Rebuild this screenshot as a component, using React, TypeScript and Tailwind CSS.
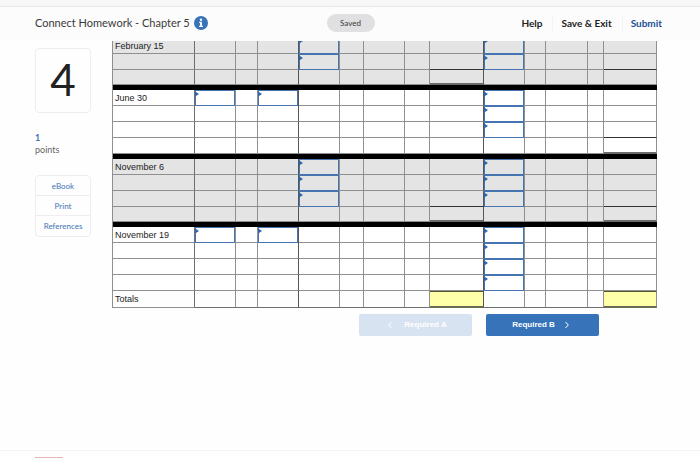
import type { ReactNode } from "react";

type Section = {
  label: string;
  shaded?: boolean;
  rows: string[];
  inputs: number[][];
  subtotals?: { row: number; cols: number[]; doubled: number[] };
};

const columns = [82, 41, 22, 41, 41, 24, 41, 25, 54, 41, 21, 42, 16, 53];

const sections: Section[] = [
  {
    label: "February 15",
    shaded: true,
    rows: ["h-[13px]", "h-4", "h-[15px]"],
    inputs: [[4, 9], [4, 9], []],
    subtotals: { row: 2, cols: [8, 13], doubled: [8] },
  },
  {
    label: "June 30",
    rows: ["h-4", "h-4", "h-4", "h-4"],
    inputs: [[1, 3, 9], [9], [9], []],
    subtotals: { row: 3, cols: [13], doubled: [13] },
  },
  {
    label: "November 6",
    shaded: true,
    rows: ["h-4", "h-4", "h-4", "h-[15px]"],
    inputs: [[4, 9], [4, 9], [4, 9], []],
    subtotals: { row: 3, cols: [8, 13], doubled: [8, 13] },
  },
  {
    label: "November 19",
    rows: ["h-4", "h-4", "h-4", "h-4"],
    inputs: [[1, 3, 9], [9], [9], [9]],
  },
];

function lineColor(col: number) {
  if (col === 0) return "border-r-[#6e6e6e]";
  if (col === 3 || col === 8) return "border-r-[#555555]";
  return "border-r-[#8f8f8f]";
}

function EntryCell({ label, col, open }: { label: string; col: number; open: boolean }) {
  return (
    <td className={`relative border-r p-0 ${lineColor(col)}`}>
      <input
        type="text"
        aria-label={label}
        className={`block w-full border border-[#4674b0] bg-transparent text-[9px] outline-none ${
          open ? "h-[13px] border-t-0" : "h-4"
        }`}
      />
      <svg
        className={`pointer-events-none absolute left-0 size-1 ${open ? "-top-0.5" : "top-0.5"}`}
        viewBox="0 0 4 4"
      >
        <path d="M0 0h1l3 2-3 2H0z" fill="#2f66b0" />
      </svg>
    </td>
  );
}

function Ledger() {
  return (
    <table className="w-full table-fixed border-separate border-spacing-0 border-l border-[#8f8f8f] font-['Liberation_Sans',Arial,sans-serif] text-[9px] text-[#222222]">
      <colgroup>
        {columns.map((w, i) => (
          <col key={i} style={{ width: w }} />
        ))}
      </colgroup>
      {sections.map((s, si) => (
        <tbody key={s.label} className={s.shaded ? "bg-[#e4e4e4]" : "bg-white"}>
          {s.rows.map((height, r) => (
            <tr key={r} className={height}>
              {columns.map((_, c) => {
                if (c === 0) {
                  return (
                    <th
                      key={c}
                      scope="row"
                      className={`overflow-hidden border-r border-b border-b-[#8f8f8f] pr-0 pb-0 pl-0.5 text-left align-top font-normal whitespace-nowrap ${lineColor(c)} ${
                        si === 0 ? "pt-0 leading-[11px]" : "pt-0.5 leading-[13px]"
                      }`}
                    >
                      {r === 0 ? s.label : null}
                    </th>
                  );
                }
                if (s.inputs[r].includes(c)) {
                  return (
                    <EntryCell
                      key={c}
                      label={`${s.label}, row ${r + 1}, column ${c}`}
                      col={c}
                      open={si === 0 && r === 0}
                    />
                  );
                }
                const sub = s.subtotals;
                const above = sub && sub.row === r + 1 && sub.cols.includes(c);
                const doubled = sub && sub.row === r && sub.doubled.includes(c);
                return (
                  <td
                    key={c}
                    className={`border-r p-0 ${lineColor(c)} ${
                      doubled
                        ? "border-b-2 border-b-[#6b6b6b]"
                        : above
                          ? "border-b border-b-[#333333]"
                          : "border-b border-b-[#8f8f8f]"
                    }`}
                  />
                );
              })}
            </tr>
          ))}
          {si < sections.length - 1 && (
            <tr className="h-[5px]">
              <td colSpan={columns.length} className="bg-black p-0" />
            </tr>
          )}
        </tbody>
      ))}
      <tfoot>
        <tr className="h-[17px]">
          {columns.map((_, c) => {
            if (c === 0) {
              return (
                <th
                  key={c}
                  scope="row"
                  className="border-r border-b border-r-[#6e6e6e] border-b-[#8f8f8f] p-0 pl-0.5 text-left align-top leading-4 font-normal"
                >
                  Totals
                </th>
              );
            }
            const total = c === 8 || c === 13;
            return (
              <td
                key={c}
                className={`border-r p-0 ${lineColor(c)} ${
                  total
                    ? "border-t border-b-2 border-t-[#555533] border-b-[#6b6b55] bg-[#ffffaa]"
                    : "border-b border-b-[#6e6e6e]"
                }`}
              />
            );
          })}
        </tr>
      </tfoot>
    </table>
  );
}

function SideLink({ children }: { children: ReactNode }) {
  return (
    <a href="#" className="flex h-5 items-center justify-center text-[#3f74b5]">
      {children}
    </a>
  );
}

export default function App() {
  return (
    <div className="flex min-h-screen flex-col bg-[#fefefe] font-[Lato,sans-serif] text-[#3a3a3a]">
      <div className="h-1.5 bg-[#f7f7f7]" />
      <header className="flex h-[35px] items-center border-t border-[#e6e6e6] bg-[#fcfcfc] pr-[38px] pb-0.5 pl-[35px]">
        <div className="flex flex-1 items-center gap-1">
          <h1 className="text-[11px] whitespace-nowrap">Connect Homework - Chapter 5</h1>
          <button type="button" aria-label="Information">
            <svg className="size-3.5" viewBox="0 0 14 14">
              <circle cx="7" cy="7" r="7" fill="#3673b9" />
              <circle cx="7" cy="3.8" r="1.2" fill="#fff" />
              <path d="M5.2 5.8h2.7v4h1v1.1H5.1V9.8h1V6.9h-.9z" fill="#fff" />
            </svg>
          </button>
        </div>
        <span className="ml-1 flex h-[18px] w-12 items-center justify-center rounded-full bg-[#e0dfe1] text-[8px]">
          Saved
        </span>
        <nav className="flex flex-1 items-center justify-end text-[10px] font-bold whitespace-nowrap text-[#222222]">
          <a href="#" className="pr-2.5">Help</a>
          <a href="#" className="border-x border-[#f3f3f3] pr-2.5 pl-2">Save &amp; Exit</a>
          <a href="#" className="pl-2 text-[#1d4f94]">Submit</a>
        </nav>
      </header>

      <div className="flex pr-[43px] pl-[35px]">
        <aside className="w-14 shrink-0 pt-[7px]">
          <div className="flex h-[65px] items-center justify-center rounded-sm border border-[#eeeeee] pb-1 text-[44px] text-[#222222]">
            4
          </div>
          <p className="mt-[19px] text-[9px] leading-3 font-bold text-[#3f74b5]">1</p>
          <p className="text-[9px] leading-3 text-[#666666]">points</p>
          <nav className="mt-[19px] divide-y divide-[#eeeeee] rounded-sm border border-[#eeeeee] text-[8px]">
            <SideLink>eBook</SideLink>
            <SideLink>Print</SideLink>
            <SideLink>References</SideLink>
          </nav>
        </aside>
        <main className="ml-[21px] min-w-0 flex-1 overflow-hidden">
          <Ledger />
          <div className="mt-1.5 mr-[58px] flex justify-end gap-3.5 font-['Liberation_Sans',Arial,sans-serif] text-[8px] font-bold text-white">
            <button
              type="button"
              disabled
              className="flex h-[22px] w-[113px] items-center justify-center gap-3 rounded-xs bg-[#d8e3f1] pl-1"
            >
              <svg className="h-2 w-1" viewBox="0 0 4 8" fill="none" stroke="#fff">
                <path d="M3.5 1 .7 4l2.8 3" />
              </svg>
              Required A
            </button>
            <button
              type="button"
              className="flex h-[22px] w-[113px] items-center justify-center gap-2.5 rounded-xs bg-[#3673b9] pr-1"
            >
              Required B
              <svg className="h-2 w-1" viewBox="0 0 4 8" fill="none" stroke="#fff">
                <path d="M.5 1l2.8 3L.5 7" />
              </svg>
            </button>
          </div>
        </main>
      </div>

      <footer className="mt-auto flex h-2 items-end border-t border-[#f3f3f3] pl-[35px]">
        <div className="h-px w-7 bg-[#e5b5b8]" />
      </footer>
    </div>
  );
}
